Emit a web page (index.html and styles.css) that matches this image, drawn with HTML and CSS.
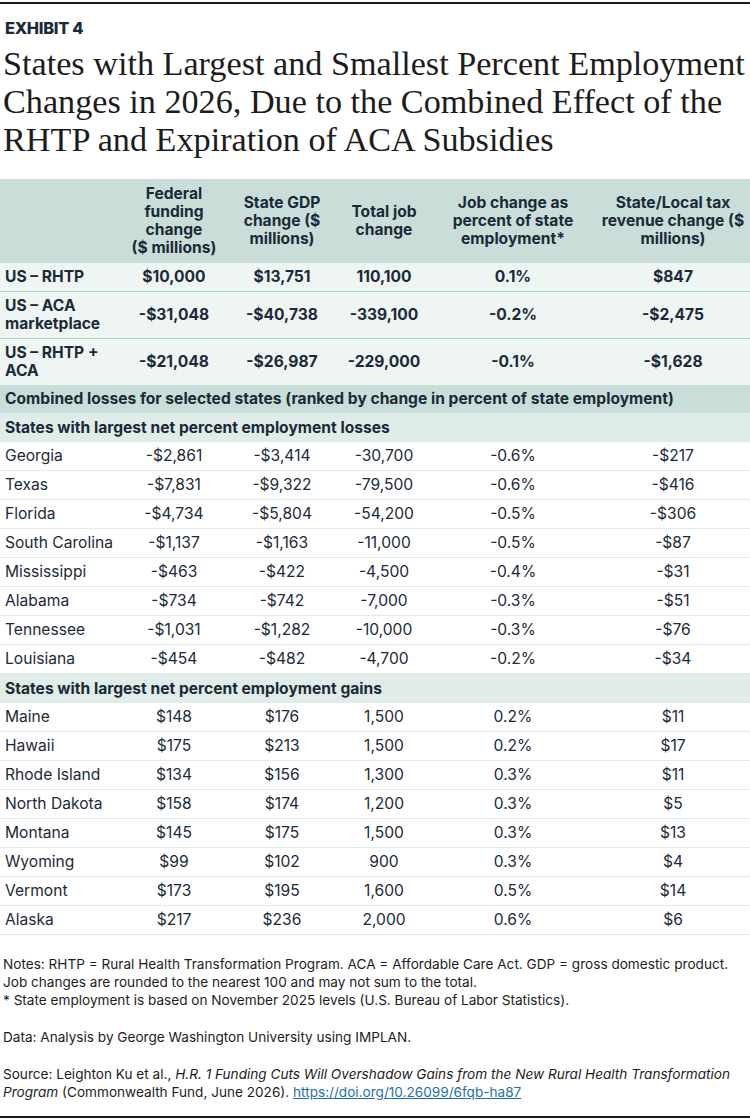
FILE: index.html
```html
<!DOCTYPE html>
<html lang="en">
  <head>
    <meta charset="UTF-8" />
    <title>Exhibit 4</title>
    <link rel="stylesheet" href="styles.css">
  </head>
  <body>
    <div class="exhibit">
      <div class="label">EXHIBIT 4</div>
      <h1>States with Largest and Smallest Percent Employment Changes in 2026, Due to the Combined Effect of the RHTP and Expiration of ACA Subsidies</h1>
      <table>
        <colgroup>
          <col class="c-name">
          <col class="c-fed">
          <col class="c-gdp">
          <col class="c-jobs">
          <col class="c-pct">
          <col class="c-tax">
        </colgroup>
        <thead>
          <tr>
            <th></th>
            <th>Federal funding change ($&nbsp;millions)</th>
            <th>State GDP change ($ millions)</th>
            <th>Total job change</th>
            <th>Job change as percent of state employment*</th>
            <th>State/Local tax revenue change ($ millions)</th>
          </tr>
        </thead>
        <tbody>
          <tr class="us"><td>US – RHTP</td><td>$10,000</td><td>$13,751</td><td>110,100</td><td>0.1%</td><td>$847</td></tr>
          <tr class="us"><td>US – ACA marketplace</td><td>-$31,048</td><td>-$40,738</td><td>-339,100</td><td>-0.2%</td><td>-$2,475</td></tr>
          <tr class="us last"><td>US – RHTP + ACA</td><td>-$21,048</td><td>-$26,987</td><td>-229,000</td><td>-0.1%</td><td>-$1,628</td></tr>
          <tr class="section"><td colspan="6">Combined losses for selected states (ranked by change in percent of state employment)</td></tr>
          <tr class="group"><td colspan="6">States with largest net percent employment losses</td></tr>
          <tr><td>Georgia</td><td>-$2,861</td><td>-$3,414</td><td>-30,700</td><td>-0.6%</td><td>-$217</td></tr>
          <tr><td>Texas</td><td>-$7,831</td><td>-$9,322</td><td>-79,500</td><td>-0.6%</td><td>-$416</td></tr>
          <tr><td>Florida</td><td>-$4,734</td><td>-$5,804</td><td>-54,200</td><td>-0.5%</td><td>-$306</td></tr>
          <tr><td>South Carolina</td><td>-$1,137</td><td>-$1,163</td><td>-11,000</td><td>-0.5%</td><td>-$87</td></tr>
          <tr><td>Mississippi</td><td>-$463</td><td>-$422</td><td>-4,500</td><td>-0.4%</td><td>-$31</td></tr>
          <tr><td>Alabama</td><td>-$734</td><td>-$742</td><td>-7,000</td><td>-0.3%</td><td>-$51</td></tr>
          <tr><td>Tennessee</td><td>-$1,031</td><td>-$1,282</td><td>-10,000</td><td>-0.3%</td><td>-$76</td></tr>
          <tr><td>Louisiana</td><td>-$454</td><td>-$482</td><td>-4,700</td><td>-0.2%</td><td>-$34</td></tr>
          <tr class="group"><td colspan="6">States with largest net percent employment gains</td></tr>
          <tr><td>Maine</td><td>$148</td><td>$176</td><td>1,500</td><td>0.2%</td><td>$11</td></tr>
          <tr><td>Hawaii</td><td>$175</td><td>$213</td><td>1,500</td><td>0.2%</td><td>$17</td></tr>
          <tr><td>Rhode Island</td><td>$134</td><td>$156</td><td>1,300</td><td>0.3%</td><td>$11</td></tr>
          <tr><td>North Dakota</td><td>$158</td><td>$174</td><td>1,200</td><td>0.3%</td><td>$5</td></tr>
          <tr><td>Montana</td><td>$145</td><td>$175</td><td>1,500</td><td>0.3%</td><td>$13</td></tr>
          <tr><td>Wyoming</td><td>$99</td><td>$102</td><td>900</td><td>0.3%</td><td>$4</td></tr>
          <tr><td>Vermont</td><td>$173</td><td>$195</td><td>1,600</td><td>0.5%</td><td>$14</td></tr>
          <tr><td>Alaska</td><td>$217</td><td>$236</td><td>2,000</td><td>0.6%</td><td>$6</td></tr>
        </tbody>
      </table>
      <div class="notes">
        <p>Notes: RHTP = Rural Health Transformation Program. ACA = Affordable Care Act. GDP = gross domestic product.<br>Job changes are rounded to the nearest 100 and may not sum to the total.<br>* State employment is based on November 2025 levels (U.S. Bureau of Labor Statistics).</p>
        <p>Data: Analysis by George Washington University using IMPLAN.</p>
        <p>Source: Leighton Ku et al., <em>H.R. 1 Funding Cuts Will Overshadow Gains from the New Rural Health Transformation Program</em> (Commonwealth Fund, June 2026). <a href="#">https://doi.org/10.26099/6fqb-ha87</a></p>
      </div>
    </div>
  </body>
</html>
```

FILE: styles.css
```css
body {
  margin: 0;
  padding: 0;
  background: #fff;
  color: #1b2a38;
  font-family: Inter, 'Noto Sans', sans-serif;
}
.exhibit {
  border-top: 2px solid #1a1a1a;
  border-bottom: 2px solid #1a1a1a;
  margin-top: 2px;
  padding: 15px 0 0;
  height: 1097px;
}
.label {
  font-size: 16.4px;
  font-weight: 800;
  letter-spacing: -0.3px;
  padding-left: 5px;
  line-height: 18px;
}
h1 {
  font-family: 'Liberation Serif', serif;
  font-weight: 400;
  font-size: 34.2px;
  line-height: 38px;
  margin: 8px 0 20px;
  padding-left: 3px;
  color: #1c1c1c;
}
table {
  width: 100%;
  border-collapse: collapse;
  font-size: 15.6px;
  line-height: 18px;
}
.c-name { width: 122px; }
.c-fed { width: 104px; }
.c-gdp { width: 112px; }
.c-jobs { width: 92px; }
.c-pct { width: 166px; }
.c-tax { width: 154px; }
th {
  background: #c9ded8;
  font-weight: 700;
  padding: 6px 4px 6px;
  vertical-align: middle;
  height: 70px;
}
td {
  text-align: center;
  padding: 5px 4px 5px;
  border-bottom: 1px solid #e1ecea;
  height: 18px;
}
td:first-child {
  text-align: left;
  padding-left: 5px;
}
tr.us td {
  background: #eef5f2;
  font-weight: 700;
  border-bottom: 1px solid #a9d3c1;
}
tr.us.last td {
  border-bottom: none;
}
tr.us td:first-child {
  padding-right: 0;
}
tr.section td {
  background: #c9ded8;
  font-weight: 700;
  text-align: left;
  border-bottom: none;
}
tr.group td {
  background: #e0ece8;
  font-weight: 700;
  text-align: left;
  padding-top: 6px;
  padding-bottom: 5px;
  border-bottom: none;
}
.notes {
  margin-top: 20px;
  font-size: 13.6px;
  line-height: 18px;
  padding-left: 3px;
  color: #1c1c1c;
}
.notes p {
  margin: 0 0 19px;
}
.notes p:last-child {
  margin-bottom: 0;
}
.notes a {
  color: #1f6fa6;
}
```
